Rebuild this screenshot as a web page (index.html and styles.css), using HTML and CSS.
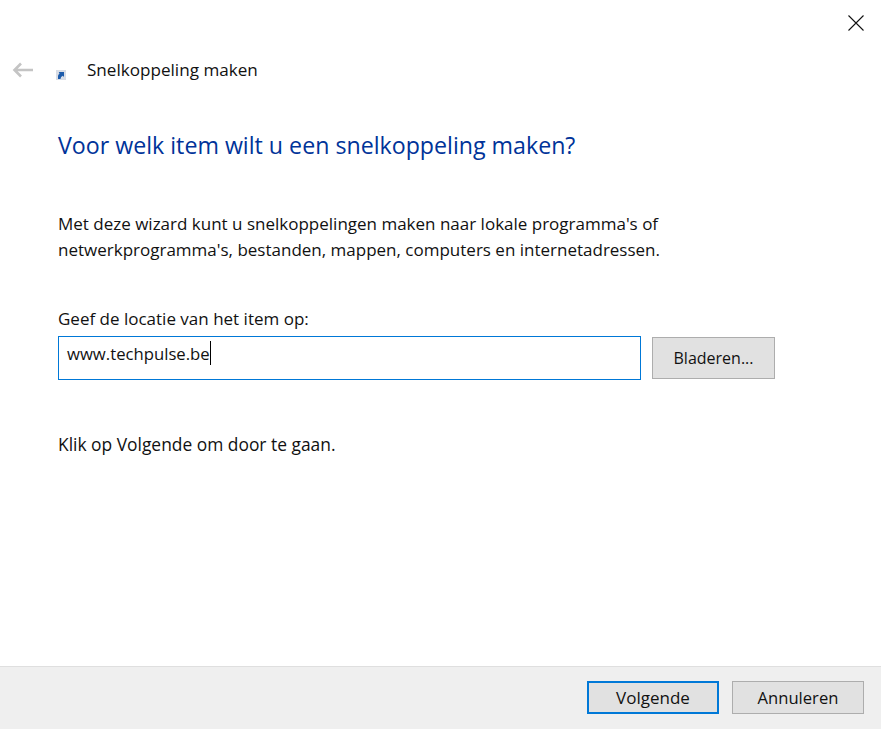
FILE: index.html
```html
<!DOCTYPE html>
<html lang="nl">
<head>
<meta charset="utf-8">
<title>Snelkoppeling maken</title>
<link rel="stylesheet" href="styles.css">
</head>
<body>
<div class="wizard">
  <div class="close-row">
    <svg class="close" width="16" height="16" viewBox="0 0 16 16"><path d="M.5.5l15 15M15.500.5l-15 15" stroke="#111" stroke-width="1.100" fill="none"/></svg>
  </div>
  <div class="nav">
    <svg class="back" width="22" height="16" viewBox="0 0 22 16"><path d="M9 1.500L2.500 8 9 14.500M3 8h18" stroke="#c4c4c4" stroke-width="2.600" fill="none"/></svg>
    <svg class="shortcut" width="10" height="10" viewBox="0 0 10 10"><rect width="10" height="10" fill="#d8dde6"/><path d="M2 9V6Q2 4.500 3.500 3.800L2.800 2H8V7L6.800 5.800Q4.500 6.500 4.500 9z" fill="#1c5bab"/></svg>
    <span class="nav-title">Snelkoppeling maken</span>
  </div>
  <main class="content">
    <h1 class="heading">Voor welk item wilt u een snelkoppeling maken?</h1>
    <p class="intro">Met deze wizard kunt u snelkoppelingen maken naar lokale programma's of<br>netwerkprogramma's, bestanden, mappen, computers en internetadressen.</p>
    <label class="label">Geef de locatie van het item op:</label>
    <div class="field-row">
      <div class="input"><span>www.techpulse.be</span><i class="caret"></i></div>
      <button class="btn browse">Bladeren...</button>
    </div>
    <p class="hint">Klik op Volgende om door te gaan.</p>
  </main>
  <footer class="footer">
    <button class="btn primary">Volgende</button>
    <button class="btn cancel">Annuleren</button>
  </footer>
</div>
</body>
</html>
```
FILE: styles.css
```css
* { box-sizing: border-box; }
html, body { margin: 0; height: 100%; background: #fff; }
body { font-family: "Open Sans", "Liberation Sans", sans-serif; font-size: 17px; color: #111; overflow: hidden; }
.wizard { width: 881px; height: 730px; display: flex; flex-direction: column; }
.close-row { height: 54px; padding: 15px 17px 0 0; display: flex; justify-content: flex-end; flex: none; }
.close { display: block; }
.nav { height: 31px; display: flex; align-items: center; padding-left: 12px; flex: none; }
.back { display: block; }
.shortcut { display: block; margin: 10px 0 0 22px; }
.nav-title { margin-left: 21px; font-size: 17.100px; }
.content { flex: 1; padding: 0 0 0 58px; }
.heading { margin: 44px 0 0; font-size: 23.200px; line-height: 33px; font-weight: 400; color: #003399; }
.intro { margin: 49px 0 0; line-height: 26px; }
.label { display: block; margin-top: 44px; line-height: 24px; }
.field-row { display: flex; align-items: center; margin-top: 5px; }
.input { width: 583px; height: 44px; border: 1px solid #0078d7; display: flex; align-items: center; padding: 0 0 10px 8px; font-size: 16.700px; }
.caret { display: block; width: 1px; height: 24px; background: #000; margin-left: 0; }
.btn { font: inherit; font-size: 17px; color: #111; background: #e1e1e1; border: 1px solid #adadad; width: 132px; height: 33px; padding: 0; }
.browse { width: 123px; height: 42px; margin-left: 11px; font-size: 16px; }
.cancel { font-size: 16.600px; }
.hint { margin: 52px 0 0; line-height: 24px; font-size: 17.400px; }
.footer { height: 63px; margin-bottom: 1px; flex: none; background: #efefef; border-top: 1px solid #dfdfdf; display: flex; justify-content: flex-end; gap: 13px; padding: 14px 17px 0 0; }
.primary { border: 2px solid #0078d7; }
```
